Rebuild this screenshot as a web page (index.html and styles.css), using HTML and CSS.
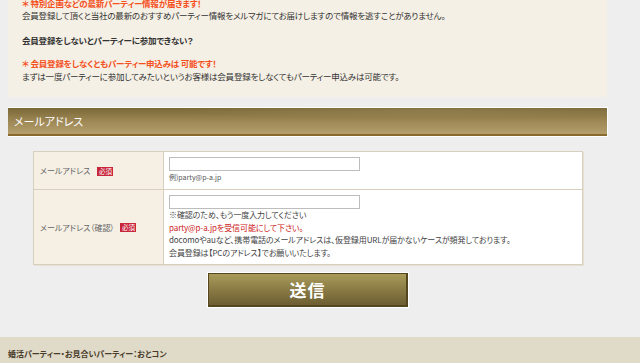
FILE: index.html
```html
<!DOCTYPE html>
<html lang="ja">
<head>
<meta charset="utf-8">
<title>メールアドレス登録</title>
<link rel="stylesheet" href="styles.css">
</head>
<body>
<div class="page">
  <div class="notice">
    <p class="notice-block first">
      <span class="accent">＊ 特別企画などの最新パーティー情報が届きます！</span><br>
      会員登録して頂くと当社の最新のおすすめパーティー情報をメルマガにてお届けしますので情報を逃すことがありません。
    </p>
    <p class="notice-block second"><strong>会員登録をしないとパーティーに参加できない？</strong></p>
    <p class="notice-block third">
      <span class="accent">＊ 会員登録をしなくともパーティー申込みは 可能です！</span><br>
      まずは一度パーティーに参加してみたいというお客様は会員登録をしなくてもパーティー申込みは可能です。
    </p>
  </div>

  <h2 class="section-head">メールアドレス</h2>

  <table class="form-table">
    <tr class="row-first">
      <th><span class="label">メールアドレス</span><span class="badge">必須</span></th>
      <td>
        <input class="field" type="text">
        <div class="example">例)party@p-a.jp</div>
      </td>
    </tr>
    <tr class="row-second">
      <th><span class="label">メールアドレス（確認）</span><span class="badge">必須</span></th>
      <td>
        <input class="field" type="text">
        <div class="notes">
          <div>※確認のため、もう一度入力してください</div>
          <div class="warn">party@p-a.jpを受信可能にして下さい。</div>
          <div>docomoやauなど、携帯電話のメールアドレスは、仮登録用URLが届かないケースが頻発しております。</div>
          <div>会員登録は【PCのアドレス】でお願いいたします。</div>
        </div>
      </td>
    </tr>
  </table>

  <div class="submit-row">
    <button class="submit" type="button">送信</button>
  </div>
</div>
<footer class="footer">
  <p>婚活パーティー・お見合いパーティー：おとコン</p>
</footer>
</body>
</html>
```
FILE: styles.css
```css
html, body {
  margin: 0;
  padding: 0;
}
body {
  background: #eeeeee;
  font-family: "Noto Sans CJK JP", "Noto Sans", sans-serif;
  font-size: 10px;
  color: #333333;
  font-feature-settings: "palt";
  overflow: hidden;
}
.page {
  width: 600px;
  margin-left: 8px;
}
.notice {
  background: #f5f0e5;
  margin-top: -3px;
  padding: 0 14px 14px 14px;
  width: 571px;
  font-size: 8.5px;
  letter-spacing: -0.2px;
}
.notice-block {
  margin: 0;
  line-height: 12px;
}
.notice-block.first { margin-bottom: 13px; }
.notice-block.second { margin-bottom: 11px; }
.notice-block.third { line-height: 13px; }
.notice-block strong { color: #333; }
.accent {
  color: #f4511e;
  font-weight: bold;
}
.section-head {
  margin: 11px 0 0 0;
  height: 26px;
  line-height: 27px;
  padding-left: 6px;
  font-size: 11px;
  font-weight: normal;
  color: #ffffff;
  background:
    radial-gradient(ellipse 60% 40% at 70% 10%, rgba(255,240,200,0.10), rgba(255,240,200,0) 70%),
    linear-gradient(#7b6838, #a08a57 55%, #b39e6c);
  border-bottom: 2px solid #89692c;
  box-shadow: 0 -1px 0 #ffffff, 1px 0 0 #ffffff, 0 1px 0 #ffffff, 1px 1px 0 #ffffff, 1px -1px 0 #ffffff;
  width: 593px;
}
.form-table {
  width: 550px;
  margin: 15px auto 0 auto;
  border-collapse: collapse;
  border: 1px solid #d8cfbf;
  background: #ffffff;
  box-shadow: 1px 1px 0 #e4e0d2;
}
.form-table th,
.form-table td {
  border: 1px solid #d8cfbf;
  vertical-align: middle;
}
.form-table th {
  width: 123px;
  background: #f5efe4;
  text-align: left;
  font-weight: normal;
  color: #666666;
  padding: 0 0 0 6px;
  font-size: 8px;
  white-space: nowrap;
}
.form-table td {
  padding: 5px 5px 5px 5px;
  vertical-align: top;
}
.row-first th { height: 27px; }
.label {
  vertical-align: middle;
}
.badge {
  display: inline-block;
  vertical-align: middle;
  margin-left: 7px;
  background: #c8243a;
  color: #ffffff;
  font-size: 6.5px;
  line-height: 9px;
  padding: 0 1.5px;
  letter-spacing: 0;
}
.row-second .badge { margin-left: 6px; }
.field {
  display: block;
  box-sizing: border-box;
  width: 191px;
  height: 14px;
  margin: 0;
  border: 1px solid #bdbdbd;
  background: #ffffff;
  padding: 0;
}
.example {
  font-size: 7px;
  line-height: 13px;
  margin-top: 0;
  color: #555555;
}
.notes {
  font-size: 8px;
  line-height: 12.5px;
  color: #444444;
  letter-spacing: -0.1px;
  white-space: nowrap;
}
.warn {
  color: #cc2222;
}
.submit-row {
  display: flex;
  justify-content: center;
  margin-top: 7px;
}
.submit {
  box-sizing: border-box;
  width: 200px;
  height: 34px;
  margin: 1px;
  border: 1px solid #54461f;
  border-right-width: 2px;
  border-bottom-width: 2px;
  background: linear-gradient(#a99a5a, #8a7b45 50%, #6d5e33);
  box-shadow: 0 0 0 1px #ffffff;
  color: #ffffff;
  font-family: "Noto Sans CJK JP", sans-serif;
  font-size: 17px;
  font-weight: bold;
  letter-spacing: 1px;
  padding: 0;
}
.footer {
  margin-top: 29px;
  background: #e0dbc9;
  height: 40px;
  padding: 0 8px;
}
.footer p {
  margin: 0;
  padding-top: 11px;
  font-size: 8px;
  line-height: 12px;
  font-weight: bold;
  color: #4a3c2a;
}
```
